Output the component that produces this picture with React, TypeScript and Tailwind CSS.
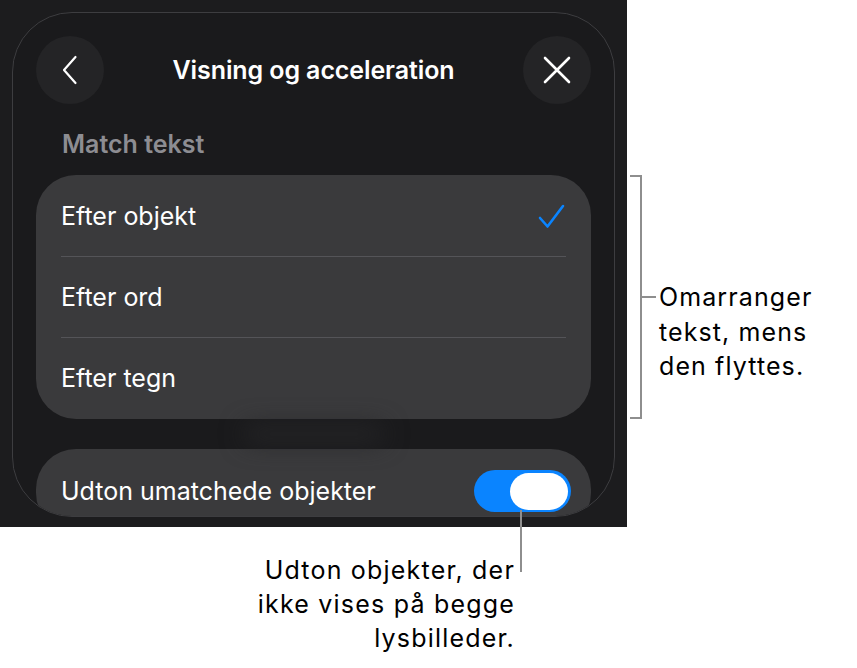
import React from 'react';

const ui = { fontFamily: 'Inter, "Noto Sans", sans-serif' };

function RoundButton({ children }: { children: React.ReactNode }) {
  return (
    <div className="w-[68px] h-[68px] rounded-full bg-[#242426] flex items-center justify-center shrink-0">
      {children}
    </div>
  );
}

function Row({ label, checked }: { label: string; checked?: boolean }) {
  return (
    <div className="h-[80px] flex items-center justify-between pl-[25px] pr-[26px]">
      <span className="pt-[2px] text-[25px] text-white">{label}</span>
      {checked && (
        <svg width="27" height="25" viewBox="0 0 27 25" fill="none">
          <path d="M2 14 L9.5 22.5 L25 2" stroke="#0a84ff" strokeWidth="2.6" strokeLinecap="round" strokeLinejoin="round" />
        </svg>
      )}
    </div>
  );
}

function SettingsSheet() {
  return (
    <div className="w-[627px] h-[527px] bg-[#1c1c1e] pt-[12px] px-[12px] shrink-0">
      <div className="h-[505px] rounded-[60px] border border-[#3d3d40] bg-[#1a1a1c] overflow-hidden px-[23px] pt-[23px]" style={ui}>
        <div className="flex items-center justify-between">
          <RoundButton>
            <svg width="18" height="30" viewBox="0 0 18 30" fill="none">
              <path d="M14.5 2 L3 15 L14.5 28" stroke="white" strokeWidth="2.2" strokeLinecap="round" strokeLinejoin="round" />
            </svg>
          </RoundButton>
          <h1 className="pt-[2px] text-[25px] font-semibold text-white tracking-[-0.1px]">Visning og acceleration</h1>
          <RoundButton>
            <svg width="30" height="30" viewBox="0 0 30 30" fill="none">
              <path d="M3 3 L27 27 M27 3 L3 27" stroke="white" strokeWidth="2.6" strokeLinecap="round" />
            </svg>
          </RoundButton>
        </div>

        <div className="mt-[27px] pl-[26px] h-[28px] flex items-center text-[25px] font-semibold text-[#8d8d92]">
          Match tekst
        </div>

        <div className="mt-[16px] rounded-[40px] bg-[#3a3a3c] py-[1px]">
          <Row label="Efter objekt" checked />
          <div className="h-px bg-[#545458] mx-[25px]" />
          <Row label="Efter ord" />
          <div className="h-px bg-[#545458] mx-[25px]" />
          <Row label="Efter tegn" />
        </div>

        <div className="h-[30px] flex items-center justify-center">
          <div className="w-[140px] h-[16px] rounded-full bg-[#262628] blur-md" />
        </div>

        <div className="h-[84px] rounded-[40px] bg-[#3a3a3c] flex items-center justify-between pl-[25px] pr-[20px]">
          <span className="pt-[2px] text-[25px] text-white">Udton umatchede objekter</span>
          <div className="w-[97px] h-[42px] rounded-full bg-[#0a84ff] flex items-center justify-end pr-[3px]">
            <div className="w-[58px] h-[37px] rounded-full bg-white" />
          </div>
        </div>
      </div>
    </div>
  );
}

export default function App() {
  const note = { fontFamily: 'Inter, "Noto Sans", sans-serif' };
  return (
    <div className="relative w-[857px] h-[668px] bg-white overflow-hidden">
      <div className="flex items-start">
        <SettingsSheet />
        <div className="mt-[175px] ml-[3px] flex items-start">
          <div className="w-[12px] h-[244px] border-y-2 border-r-2 border-[#8e8e8e]" />
          <div className="pt-[105px] flex items-start">
            <div className="mt-[16px] w-[14px] h-[2px] bg-[#8e8e8e]" />
            <p className="ml-[3px] text-[25px] leading-[34.5px] tracking-[1.1px] text-black" style={note}>
              Omarranger
              <br />
              tekst, mens
              <br />
              den flyttes.
            </p>
          </div>
        </div>
      </div>

      <div className="w-[515px] pt-[26px] text-right text-[25px] leading-[34px] tracking-[1.2px] text-black" style={note}>
        Udton objekter, der
        <br />
        ikke vises på begge
        <br />
        lysbilleder.
      </div>

      {/* leader line from the switch down to its caption */}
      <div className="absolute left-[520px] top-[510px] w-[2px] h-[62px] bg-[#8e8e8e]" />
    </div>
  );
}
